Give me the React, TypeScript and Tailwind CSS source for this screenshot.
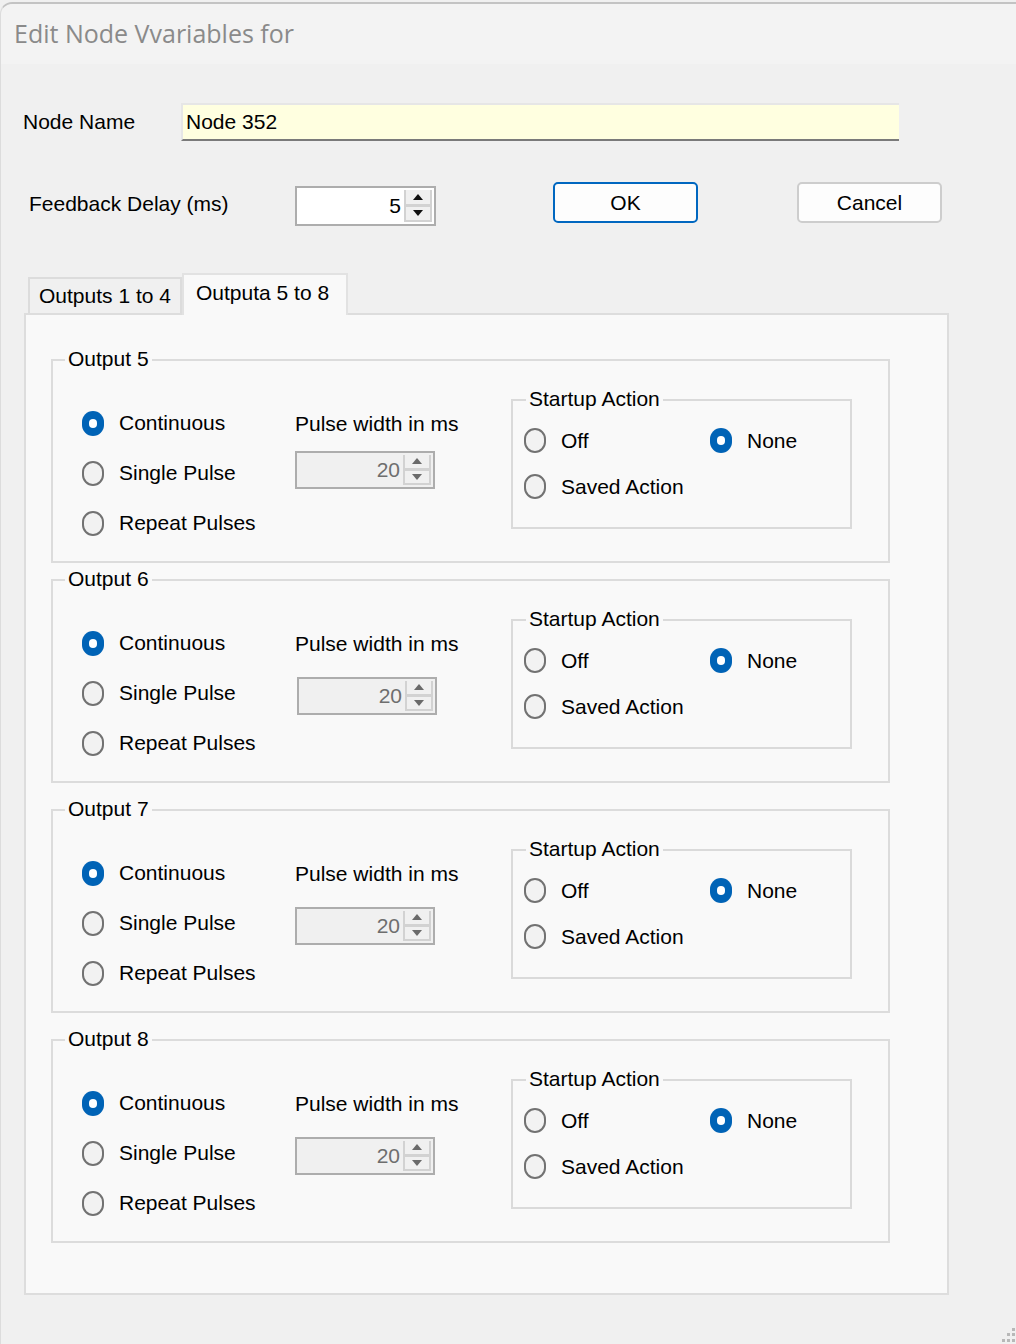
import React from 'react'

const FONT = "font-['Liberation_Sans',Arial,sans-serif]"

interface OutputGroupProps {
  num: number
  spinClass?: string
}

function Radio({ checked, label, className = '' }: { checked?: boolean; label: string; className?: string }) {
  return (
    <div className={`flex items-center ${className}`}>
      {checked ? (
        <span className="flex h-[25px] w-[22px] items-center justify-center rounded-full bg-[#0063b6]">
          <span className="h-[9px] w-[8px] rounded-full bg-white" />
        </span>
      ) : (
        <span className="h-[25px] w-[22px] rounded-full border-2 border-[#727272] bg-[#f2f2f2]" />
      )}
      <span className="ml-[15px] whitespace-nowrap">{label}</span>
    </div>
  )
}

function Arrow({ up, color }: { up?: boolean; color: string }) {
  return (
    <svg width="10" height="6" viewBox="0 0 10 6">
      {up ? <polygon points="5,0 10,6 0,6" fill={color} /> : <polygon points="0,0 10,0 5,6" fill={color} />}
    </svg>
  )
}

function Spin({ value, disabled, className = '' }: { value: string; disabled?: boolean; className?: string }) {
  const arrow = disabled ? '#6a6a6a' : '#111111'
  return (
    <div
      className={`flex border-2 border-[#adadad] ${disabled ? 'bg-[#f0f0f0] text-[#6e6e6e]' : 'bg-white text-black'} ${className}`}
    >
      <div className="flex flex-1 items-center justify-end pr-[3px]">{value}</div>
      <div className="my-[2px] mr-[2px] flex w-[28px] flex-col border-x-2 border-b-2 border-t-0 border-[#d2d2d2] bg-[#f0f0f0]">
        <div className="flex flex-1 items-center justify-center border-b-[3px] border-[#d2d2d2]">
          <Arrow up color={arrow} />
        </div>
        <div className="flex flex-1 items-center justify-center">
          <Arrow color={arrow} />
        </div>
      </div>
    </div>
  )
}

function OutputGroup({ num, spinClass = 'mt-[14px]' }: OutputGroupProps) {
  return (
    <div className="relative ml-[25px] h-[204px] w-[839px] border-2 border-[#dcdcdc]">
      <span className="absolute left-[12px] top-[-15px] bg-[#f9f9f9] px-[3px] leading-[26px]">Output {num}</span>
      <div className="flex">
        {/* left radios */}
        <div className="ml-[29px] mt-[37px] flex w-[184px] flex-col">
          <Radio checked label="Continuous" className="h-[50px]" />
          <Radio label="Single Pulse" className="h-[50px]" />
          <Radio label="Repeat Pulses" className="h-[50px]" />
        </div>

        {/* pulse width */}
        <div className="ml-[29px] mt-[50px] flex w-[216px] flex-col">
          <span className="leading-[26px]">Pulse width in ms</span>
          <Spin value="20" disabled className={`h-[38px] w-[140px] ${spinClass}`} />
        </div>

        {/* startup action */}
        <div className="relative mt-[38px] h-[130px] w-[341px] border-2 border-[#dadada]">
          <span className="absolute left-[13px] top-[-15px] bg-[#f9f9f9] px-[3px] leading-[26px]">Startup Action</span>
          <div className="ml-[11px] mt-[27px] flex h-[25px] items-center">
            <Radio label="Off" className="w-[186px]" />
            <Radio checked label="None" />
          </div>
          <div className="ml-[11px] mt-[21px] flex h-[25px] items-center">
            <Radio label="Saved Action" />
          </div>
        </div>
      </div>
    </div>
  )
}

export default function App() {
  return (
    <div className={`relative h-[1344px] w-[1016px] overflow-hidden bg-[#f0f0f0] text-[21px] text-black ${FONT}`}>
      <div className="mt-[2px] h-[1342px] rounded-tl-[12px] border-l border-t-2 border-[#c3c3c3] border-l-[#dcdcdc] bg-[#f0f0f0]">
        {/* title bar */}
        <div className="flex h-[60px] items-center rounded-tl-[12px] bg-[#f3f3f3] pl-[13px]">
          <span className="font-['Open_Sans',sans-serif] text-[25px] text-[#8a8a8a]">Edit Node Vvariables for</span>
        </div>

        {/* node name */}
        <div className="mt-[39px] flex h-[38px] items-center">
          <span className="ml-[22px] w-[158px]">Node Name</span>
          <div className="flex h-[38px] w-[718px] items-center border-l-2 border-t-2 border-b-2 border-[#e6e6e6] border-b-[#7a7a7a] bg-[#ffffe0] pl-[3px]">
            Node 352
          </div>
        </div>

        {/* feedback delay + buttons */}
        <div className="mt-[41px] flex h-[44px] items-start">
          <span className="ml-[28px] mt-[6px] w-[266px]">Feedback Delay (ms)</span>
          <Spin value="5" className="mt-[4px] h-[40px] w-[141px]" />
          <button className="ml-[117px] h-[41px] w-[145px] rounded-[5px] border-2 border-[#0067c0] bg-[#fdfdfd]">OK</button>
          <button className="ml-[99px] h-[41px] w-[145px] rounded-[5px] border-2 border-[#cdcdcd] bg-[#fdfdfd]">Cancel</button>
        </div>

        {/* tabs */}
        <div className="ml-[27px] mt-[47px] flex items-end">
          <div className="flex h-[36px] w-[154px] items-center border-2 border-b-0 border-[#dcdcdc] bg-[#f0f0f0] pl-[9px]">
            Outputs 1 to 4
          </div>
          <div className="relative z-10 mb-[-2px] flex h-[42px] w-[166px] items-start border-2 border-b-0 border-[#e2e2e2] bg-[#f9f9f9] pl-[12px] pt-[2px]">
            Outputa 5 to 8
          </div>
        </div>

        {/* tab panel */}
        <div className="ml-[23px] flex h-[982px] w-[925px] flex-col border-2 border-[#dddddd] bg-[#f9f9f9] pt-[44px]">
          <OutputGroup num={5} />
          <div className="h-[16px]" />
          <OutputGroup num={6} spinClass="ml-[2px] mt-[20px]" />
          <div className="h-[26px]" />
          <OutputGroup num={7} spinClass="mt-[20px]" />
          <div className="h-[26px]" />
          <OutputGroup num={8} spinClass="mt-[20px]" />
        </div>
      </div>

      {/* resize grip */}
      <svg className="absolute bottom-0 right-0" width="14" height="16" viewBox="0 0 14 16">
        <rect x="10" y="0" width="3" height="3" fill="#b8b8b8" />
        <rect x="5" y="5" width="3" height="3" fill="#b8b8b8" />
        <rect x="10" y="5" width="3" height="3" fill="#b8b8b8" />
        <rect x="0" y="11" width="3" height="3" fill="#b8b8b8" />
        <rect x="5" y="11" width="3" height="3" fill="#b8b8b8" />
        <rect x="10" y="11" width="3" height="3" fill="#b8b8b8" />
      </svg>
    </div>
  )
}
